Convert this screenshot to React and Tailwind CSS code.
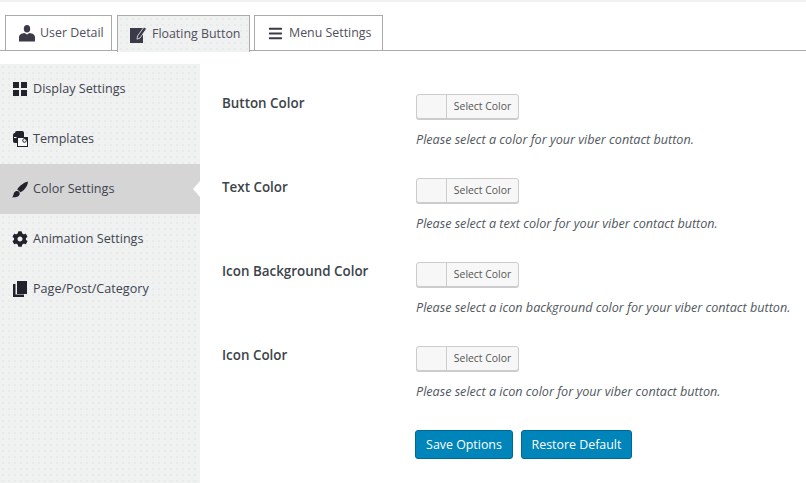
import { FaBars, FaCog } from 'react-icons/fa'

const dots = 'bg-[#f0f1f1] bg-[radial-gradient(#e0e1e1_0.6px,transparent_0.8px)] bg-[length:6px_6px]'

const UserIcon = () => (
  <svg width="16" height="17" viewBox="0 0 16 17" fill="#3a3a48">
    <ellipse cx="8" cy="3.800" rx="3.200" ry="3.800" />
    <path d="M5.500 8 8 9.500 10.500 8c3 .5 5.500 1.500 5.500 4.500V16.500H0V12.500C0 9.500 2.500 8.500 5.500 8z" />
  </svg>
)

const EditIcon = () => (
  <svg width="17" height="17" viewBox="0 0 17 17">
    <path d="M0 2h13v15H0z" fill="#3a3a48" />
    <path d="M7.500 10 14 1l2.500 1.800L10 12l-3 1.200z" fill="#3a3a48" stroke="#f0f1f1" strokeWidth="0.800" />
  </svg>
)

const GridIcon = () => (
  <svg width="14" height="14" viewBox="0 0 14 14" fill="#22222c">
    <rect width="6" height="6" />
    <rect x="8" width="6" height="6" />
    <rect y="8" width="6" height="6" />
    <rect x="8" y="8" width="6" height="6" />
  </svg>
)

const TemplatesIcon = () => (
  <svg width="16" height="16" viewBox="0 0 16 16" stroke="#22222c">
    <rect x="3.500" y="0.500" width="8" height="9" rx="1" fill="#22222c" />
    <rect x="1.500" y="2.500" width="8" height="9" rx="1" fill="#22222c" />
    <rect x="5.500" y="6.500" width="10" height="9" fill="#f8f8f8" />
    <path d="M5.500 6.500h6l4 3v-3z" fill="#22222c" />
    <circle cx="12.500" cy="9.500" r="1.800" fill="#f8f8f8" />
    <path d="M2 6.500h2.500" stroke="#f8f8f8" />
  </svg>
)

const BrushIcon = () => (
  <svg width="17" height="17" viewBox="0 0 17 17" fill="#22222c">
    <path d="M5.500 8.500C8 4.500 12.500 1 17 0c-.2 4.500-3.500 9-7.800 11.500z" />
    <path d="M2.500 11.500c1.500-1.800 3.800-2 5-.7 1.200 1.300.9 3.200-.5 4.700C5.500 16.800 2 17 0 17c1.500-1.200 1.500-3.700 2.500-5.500z" />
  </svg>
)

const PagesIcon = () => (
  <svg width="14" height="16" viewBox="0 0 14 16" fill="#22222c">
    <path d="M4 0h10v13H4z" />
    <path d="M0 3h2.500v10.500H11V16H0z" />
  </svg>
)

const menu = [
  { label: 'Display Settings', icon: <GridIcon /> },
  { label: 'Templates', icon: <TemplatesIcon /> },
  { label: 'Color Settings', icon: <BrushIcon />, active: true },
  { label: 'Animation Settings', icon: <FaCog size={18} /> },
  { label: 'Page/Post/Category', icon: <PagesIcon /> },
]

const rows = [
  { label: 'Button Color', text: 'Please select a color for your viber contact button.' },
  { label: 'Text Color', text: 'Please select a text color for your viber contact button.' },
  { label: 'Icon Background Color', text: 'Please select a icon background color for your viber contact button.' },
  { label: 'Icon Color', text: 'Please select a icon color for your viber contact button.' },
]

const Tab = ({ icon, label, active, width }) => (
  <div className={`flex items-center gap-[5px] border border-b-0 border-[#aaaaaa] pl-[12px] text-[12.4px] text-[#50505c] whitespace-nowrap ${width} ${active ? `${dots} h-[37px] -mb-px` : 'bg-white h-[35px]'}`}>
    <span className="w-[17px] flex justify-center text-[#3a3a48]">{icon}</span>
    {label}
  </div>
)

export default function App() {
  return (
    <div className="h-[483px] overflow-hidden bg-white font-['Open_Sans',sans-serif] border-t-2 border-[#f1f1f1]">
      <div className="h-[49px] pt-[13px] pl-[5px] flex items-start gap-[4px] border-b border-[#aaaaaa]">
        <Tab icon={<UserIcon />} label="User Detail" width="w-[107px] mr-px" />
        <Tab icon={<EditIcon />} label="Floating Button" active width="w-[133px]" />
        <Tab icon={<FaBars size={15} />} label="Menu Settings" width="w-[129px]" />
      </div>
      <div className="flex mt-[13px] h-[419px]">
        <div className={`w-[200px] shrink-0 ${dots}`}>
          {menu.map((m) => (
            <div key={m.label} className={`relative h-[50px] flex items-center gap-[5px] pl-[12px] text-[12.6px] text-[#3e4450] ${m.active ? 'bg-[#d5d5d5]' : ''}`}>
              <span className="w-[16px] flex justify-center text-[#22222c]">{m.icon}</span>
              {m.label}
              {m.active && (
                <span className="absolute right-0 top-[17px] border-y-[8px] border-r-[7px] border-y-transparent border-r-white" />
              )}
            </div>
          ))}
        </div>
        <div className="pl-[22px] pt-[30px]">
          {rows.map((r) => (
            <div key={r.label} className="flex h-[84px]">
              <div className="w-[194px] text-[13.4px] font-semibold text-[#3c434a] leading-[18px]">{r.label}</div>
              <div>
                <div className="flex h-[25px] w-[103px] rounded-[3px] border border-[#cccccc] shadow-[0_1px_0_#cccccc] bg-[#f7f7f7] overflow-hidden">
                  <span className="w-[30px] border-r border-[#cccccc]" />
                  <span className="flex-1 text-center text-[10.4px] leading-[23px] text-[#555555]">Select Color</span>
                </div>
                <p className="mt-[12px] text-[12.6px] leading-[18px] italic text-[#50575e] whitespace-nowrap">{r.text}</p>
              </div>
            </div>
          ))}
          <div className="flex gap-[8px] pl-[193px]">
            <button className="h-[29px] w-[98px] pt-px rounded-[3px] bg-[#0085ba] border border-[#006799] text-[12.4px] text-white">Save Options</button>
            <button className="h-[29px] w-[111px] pt-px rounded-[3px] bg-[#0085ba] border border-[#006799] text-[12.4px] text-white">Restore Default</button>
          </div>
        </div>
      </div>
    </div>
  )
}
